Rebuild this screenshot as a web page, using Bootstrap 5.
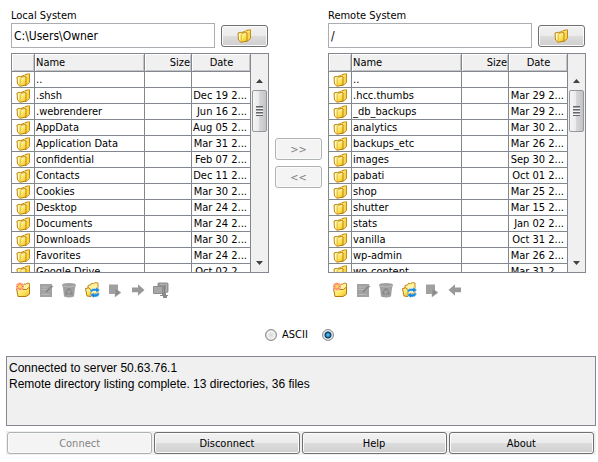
<!DOCTYPE html>
<html lang="en">
<head>
<meta charset="utf-8">
<meta name="viewport" content="width=device-width, initial-scale=1">
<title>FTP Client</title>
<link href="https://cdn.jsdelivr.net/npm/bootstrap@5.3.0/dist/css/bootstrap.min.css" rel="stylesheet">
<style>
body{background:#fff;color:#000;font-family:"DejaVu Sans Condensed","DejaVu Sans",Tahoma,sans-serif;font-stretch:condensed;font-size:11px;line-height:15px}
.systems{padding:8px 12px 0 11px}
.path-box{height:25px;border:1px solid #abadb3;border-radius:0;padding:0 2px;font-size:12px;color:#000}
.sys-btn{height:22px;padding:0;border:1px solid #707070;border-radius:3px;font-size:11px;line-height:15px;color:#000;background:linear-gradient(#f2f2f2 0,#ebebeb 50%,#dddddd 50%,#cfcfcf 100%);box-shadow:inset 0 0 0 1px #fbfbfb}
.sys-btn:disabled{background:#f4f4f4;border-color:#adb2b5;color:#838383;opacity:1}
.browse{width:47px;margin:0 1px 0 6px}
.transfer{width:59px;padding:130px 6px 0;gap:6px}
.pane{height:220px;border:1px solid #828790;margin-top:5px}
.files{table-layout:fixed;border-collapse:separate;border-spacing:0;width:100%}
.files th,.files td{height:16px;padding:0 0 0 1px;border-right:1px solid #828790;border-bottom:1px solid #828790;line-height:15px;white-space:nowrap;overflow:hidden;font-weight:400}
.files th{height:18px;line-height:17px;background:#f0f0f0;box-shadow:inset 1px 1px #fff,inset -1px -1px #c4c4c4}
.files .c-icon{width:23px;padding-left:4px}
.files .c-size{width:47px;text-align:right;padding-right:1px}
.files .c-date{width:59px;text-align:right;padding-right:3px}
.files th.c-date{text-align:center;padding-right:0}
.files svg{display:block}
.scroller{width:17px;background:#f0f0f0;padding-top:18px}
.scroller button{height:18px;padding:0;border:0;background:none;line-height:0}
.thumb{height:42px;margin:0 1px;border:1px solid #979797;border-radius:2px;background:linear-gradient(90deg,#f5f5f5 0,#e9e9eb 48%,#d6d6d8 50%,#c4c4c8 100%)}
.grip{width:7px;height:10px;background:repeating-linear-gradient(#63666b 0,#63666b 1px,#a5a7aa 1px,#a5a7aa 2px,#f3f3f3 2px,#f3f3f3 3px)}
.tools{gap:5px;padding:8px 3px 0}
.tools button{width:18px;height:18px;padding:0;border:0;background:none;line-height:0}
.mode{padding:28px 0 0 265px}
.mode input{appearance:none;width:12px;height:12px;margin:0;border:1px solid #8e8f8f;border-radius:50%;background:radial-gradient(circle,#d5d8dc 0,#eeeeee 45%,#f6f6f6 55%,#b8bcc0 75%)}
.mode input:checked{background:radial-gradient(circle at 50% 50%,#6fd0f5 0,#1f7ab5 2px,#0c3554 3px,#e8edf1 4px,#c6cacd 6px)}
.mode label{margin:0 14px 0 5px}
.log{height:70px;resize:none;border:1px solid #828790;border-radius:0;background:#f0f0f0;color:#000;padding:3px 2px;font-family:"Liberation Sans",Arial,sans-serif;font-size:12px;line-height:16px;display:block}
.lower{padding:14px 2px 0 6px}
.actions{margin-top:5px;padding:1px 2px 1px 1px;gap:2px;background:#f0f0f0}
</style>
<script src="https://cdn.jsdelivr.net/npm/bootstrap@5.3.0/dist/js/bootstrap.bundle.min.js"></script>
</head>
<body>
<svg width="0" height="0" class="position-absolute" aria-hidden="true">
<defs>
<linearGradient id="gold" x1="0" y1="0" x2="1" y2="1"><stop offset="0" stop-color="#fffbb8"/><stop offset=".55" stop-color="#fde763"/><stop offset="1" stop-color="#f0bd22"/></linearGradient>
</defs>
<symbol id="folder" viewBox="0 0 15 14"><path d="M4.500 3.500 8 2.500 9 1.500 13.500.8V9.500L10 12.500H5z" fill="#f8d84a" stroke="#c48a1a"/><path d="M9.500 4 12.500 2" stroke="#fff7b0"/><path d="M1 4 4 3.300 5 4.300 10 3.600V12L4 13.300 1.500 11z" fill="url(#gold)" stroke="#bf8614"/><path d="M4.300 5V12.500" stroke="#d9a52a" stroke-width=".7"/><path d="M2.500 5V10.500M5.500 5.300 9 4.800" stroke="#fffde0" stroke-width=".8"/></symbol>
<symbol id="open" viewBox="0 0 16 16"><path d="M4 5 8 4 9 2 11 2.300 12 1 14.500 1.500V10.500L6 14z" fill="#fff3a0" stroke="#c58a1c"/><path d="M1.500 6.500 4 6.200 5 7.500H11.500L14.500 5V12.200L11 14.500H3z" fill="url(#gold)" stroke="#b87a10"/></symbol>
<symbol id="new" viewBox="0 0 16 16"><use href="#open"/><circle cx="5" cy="4.500" r="4" fill="#ffb899"/><path d="M5 1V8M1.500 4.500H8.500M2.500 2 7.500 7M7.500 2 2.500 7" stroke="#f4683c" stroke-width=".9"/><circle cx="5" cy="4.500" r="1.800" fill="#ffd75c"/></symbol>
<symbol id="edit" viewBox="0 0 16 16"><path d="M2 2H14V15H2z" fill="#a2a2a2"/><path d="M3.500 5H9.500M3.500 7.500H8.500M3.500 12.500H11.500" stroke="#b8b8b8"/><path d="M6.500 12 7.500 9 13.500 3 15 4.500 9 10.800z" fill="#858585" stroke="#bdbdbd" stroke-width=".5"/></symbol>
<symbol id="trash" viewBox="0 0 16 16"><path d="M1 3Q1 1 8 1T15 3L14 6 13 14.500Q8 16.500 3 14.500L2 6z" fill="#a0a0a0"/><path d="M2 4Q8 6 14 4" fill="none" stroke="#bcbcbc"/><path d="M6 8.500 8 6.500 10 8.500M10.500 9.500 11 12H8M5.500 9 5 12H7" fill="none" stroke="#828282" stroke-width="1.200"/></symbol>
<symbol id="refresh" viewBox="0 0 16 16"><path d="M4 5V3.500L7 2.700 7.500 1.200 9.500 1.700 11 .7 14 1V11L5 13z" fill="#fff3a0" stroke="#c58a1c"/><path d="M1.500 6.500 5 5.800 7 8V14.500L3 14z" fill="url(#gold)" stroke="#b87a10"/><path d="M6 10Q6 6.500 10 6.500H12V5L16 8 12 10.800V9H10Q8 9 8 10zM15.500 11Q15.500 15 11.500 15H10V16L6 13 10 10.500V12H12Q13 12 13.500 11z" fill="#1689dd" stroke="#fff" stroke-width=".4"/></symbol>
<symbol id="play" viewBox="0 0 16 16"><path d="M2 2.500H11V12H2z" fill="#a0a0a0"/><path d="M8 6.500 14 10.500 8 15z" fill="#8c8c8c" stroke="#adadad" stroke-width=".5"/></symbol>
<symbol id="next" viewBox="0 0 16 16"><path d="M2 5.500H8V2.200L14.500 8 8 13.800V10.300H2z" fill="#999"/></symbol>
<symbol id="prev" viewBox="0 0 16 16"><path d="M14 5.500H8V2.200L1.500 8 8 13.800V10.300H14z" fill="#999"/></symbol>
<symbol id="zip" viewBox="0 0 16 16"><path d="M4.500 1.500Q4.500.5 6 .5H14Q15.500.5 15.500 2V9Q15.500 11 13 11H7V4H4.500z" fill="#949494"/><path d="M.5 4.500H9.500V11.500H.5z" fill="#a8a8a8" stroke="#8c8c8c"/><path d="M7 2.500H13.500V9H10.500" fill="none" stroke="#b2b2b2"/><path d="M11.500 3V11" stroke="#838383"/><path d="M9 11H13V13H9zM7 13H15V14H7zM10 14H14V16H10z" fill="#8b8b8b"/></symbol>
</svg>

<main>
<div class="systems d-flex align-items-start">
  <section class="flex-fill" aria-label="Local System">
    <label for="local-path" class="d-block">Local System</label>
    <div class="d-flex align-items-center">
      <input id="local-path" class="form-control path-box flex-fill w-auto" size="1" type="text" value="C:\Users\Owner">
      <button type="button" class="btn sys-btn browse d-flex align-items-center justify-content-center" aria-label="Browse local"><svg width="15" height="14"><use href="#folder"/></svg></button>
    </div>
    <div class="pane d-flex overflow-hidden">
      <div class="flex-fill overflow-hidden">
      <table class="files">
        <thead><tr><th class="c-icon"></th><th>Name</th><th class="c-size">Size</th><th class="c-date">Date</th></tr></thead>
        <tbody>
        <tr><td class="c-icon"><svg width="15" height="14"><use href="#folder"/></svg></td><td>..</td><td class="c-size"></td><td class="c-date"></td></tr>
        <tr><td class="c-icon"><svg width="15" height="14"><use href="#folder"/></svg></td><td>.shsh</td><td class="c-size"></td><td class="c-date">Dec 19 2...</td></tr>
        <tr><td class="c-icon"><svg width="15" height="14"><use href="#folder"/></svg></td><td>.webrenderer</td><td class="c-size"></td><td class="c-date">Jun 16 2...</td></tr>
        <tr><td class="c-icon"><svg width="15" height="14"><use href="#folder"/></svg></td><td>AppData</td><td class="c-size"></td><td class="c-date">Aug 05 2...</td></tr>
        <tr><td class="c-icon"><svg width="15" height="14"><use href="#folder"/></svg></td><td>Application Data</td><td class="c-size"></td><td class="c-date">Mar 31 2...</td></tr>
        <tr><td class="c-icon"><svg width="15" height="14"><use href="#folder"/></svg></td><td>confidential</td><td class="c-size"></td><td class="c-date">Feb 07 2...</td></tr>
        <tr><td class="c-icon"><svg width="15" height="14"><use href="#folder"/></svg></td><td>Contacts</td><td class="c-size"></td><td class="c-date">Dec 11 2...</td></tr>
        <tr><td class="c-icon"><svg width="15" height="14"><use href="#folder"/></svg></td><td>Cookies</td><td class="c-size"></td><td class="c-date">Mar 30 2...</td></tr>
        <tr><td class="c-icon"><svg width="15" height="14"><use href="#folder"/></svg></td><td>Desktop</td><td class="c-size"></td><td class="c-date">Mar 24 2...</td></tr>
        <tr><td class="c-icon"><svg width="15" height="14"><use href="#folder"/></svg></td><td>Documents</td><td class="c-size"></td><td class="c-date">Mar 24 2...</td></tr>
        <tr><td class="c-icon"><svg width="15" height="14"><use href="#folder"/></svg></td><td>Downloads</td><td class="c-size"></td><td class="c-date">Mar 30 2...</td></tr>
        <tr><td class="c-icon"><svg width="15" height="14"><use href="#folder"/></svg></td><td>Favorites</td><td class="c-size"></td><td class="c-date">Mar 24 2...</td></tr>
        <tr><td class="c-icon"><svg width="15" height="14"><use href="#folder"/></svg></td><td>Google Drive</td><td class="c-size"></td><td class="c-date">Oct 02 2...</td></tr>
        </tbody>
      </table>
      </div>
      <div class="scroller d-flex flex-column flex-shrink-0">
        <button type="button" aria-label="Scroll up"><svg width="7" height="4"><path d="M0 4 3.500 0 7 4z" fill="#404040"/></svg></button>
        <div class="thumb d-flex align-items-center justify-content-center"><div class="grip"></div></div>
        <button type="button" class="mt-auto" aria-label="Scroll down"><svg width="7" height="4"><path d="M0 0 3.500 4 7 0z" fill="#404040"/></svg></button>
      </div>
    </div>
    <div class="tools d-flex">
      <button type="button" aria-label="New folder"><svg width="16" height="16"><use href="#new"/></svg></button>
      <button type="button" disabled aria-label="Rename"><svg width="16" height="16"><use href="#edit"/></svg></button>
      <button type="button" disabled aria-label="Delete"><svg width="16" height="16"><use href="#trash"/></svg></button>
      <button type="button" aria-label="Refresh"><svg width="16" height="16"><use href="#refresh"/></svg></button>
      <button type="button" disabled aria-label="Run"><svg width="16" height="16"><use href="#play"/></svg></button>
      <button type="button" disabled aria-label="Upload"><svg width="16" height="16"><use href="#next"/></svg></button>
      <button type="button" disabled aria-label="Zip"><svg width="16" height="16"><use href="#zip"/></svg></button>
    </div>
  </section>

  <div class="transfer d-flex flex-column flex-shrink-0">
    <button type="button" class="btn sys-btn" disabled>&gt;&gt;</button>
    <button type="button" class="btn sys-btn" disabled>&lt;&lt;</button>
  </div>

  <section class="flex-fill" aria-label="Remote System">
    <label for="remote-path" class="d-block">Remote System</label>
    <div class="d-flex align-items-center">
      <input id="remote-path" class="form-control path-box flex-fill w-auto" size="1" type="text" value="/">
      <button type="button" class="btn sys-btn browse d-flex align-items-center justify-content-center" aria-label="Browse remote"><svg width="15" height="14"><use href="#folder"/></svg></button>
    </div>
    <div class="pane d-flex overflow-hidden">
      <div class="flex-fill overflow-hidden">
      <table class="files">
        <thead><tr><th class="c-icon"></th><th>Name</th><th class="c-size">Size</th><th class="c-date">Date</th></tr></thead>
        <tbody>
        <tr><td class="c-icon"><svg width="15" height="14"><use href="#folder"/></svg></td><td>..</td><td class="c-size"></td><td class="c-date"></td></tr>
        <tr><td class="c-icon"><svg width="15" height="14"><use href="#folder"/></svg></td><td>.hcc.thumbs</td><td class="c-size"></td><td class="c-date">Mar 29 2...</td></tr>
        <tr><td class="c-icon"><svg width="15" height="14"><use href="#folder"/></svg></td><td>_db_backups</td><td class="c-size"></td><td class="c-date">Mar 29 2...</td></tr>
        <tr><td class="c-icon"><svg width="15" height="14"><use href="#folder"/></svg></td><td>analytics</td><td class="c-size"></td><td class="c-date">Mar 30 2...</td></tr>
        <tr><td class="c-icon"><svg width="15" height="14"><use href="#folder"/></svg></td><td>backups_etc</td><td class="c-size"></td><td class="c-date">Mar 26 2...</td></tr>
        <tr><td class="c-icon"><svg width="15" height="14"><use href="#folder"/></svg></td><td>images</td><td class="c-size"></td><td class="c-date">Sep 30 2...</td></tr>
        <tr><td class="c-icon"><svg width="15" height="14"><use href="#folder"/></svg></td><td>pabati</td><td class="c-size"></td><td class="c-date">Oct 01 2...</td></tr>
        <tr><td class="c-icon"><svg width="15" height="14"><use href="#folder"/></svg></td><td>shop</td><td class="c-size"></td><td class="c-date">Mar 25 2...</td></tr>
        <tr><td class="c-icon"><svg width="15" height="14"><use href="#folder"/></svg></td><td>shutter</td><td class="c-size"></td><td class="c-date">Mar 15 2...</td></tr>
        <tr><td class="c-icon"><svg width="15" height="14"><use href="#folder"/></svg></td><td>stats</td><td class="c-size"></td><td class="c-date">Jan 02 2...</td></tr>
        <tr><td class="c-icon"><svg width="15" height="14"><use href="#folder"/></svg></td><td>vanilla</td><td class="c-size"></td><td class="c-date">Oct 31 2...</td></tr>
        <tr><td class="c-icon"><svg width="15" height="14"><use href="#folder"/></svg></td><td>wp-admin</td><td class="c-size"></td><td class="c-date">Mar 26 2...</td></tr>
        <tr><td class="c-icon"><svg width="15" height="14"><use href="#folder"/></svg></td><td>wp-content</td><td class="c-size"></td><td class="c-date">Mar 31 2...</td></tr>
        </tbody>
      </table>
      </div>
      <div class="scroller d-flex flex-column flex-shrink-0">
        <button type="button" aria-label="Scroll up"><svg width="7" height="4"><path d="M0 4 3.500 0 7 4z" fill="#404040"/></svg></button>
        <div class="thumb d-flex align-items-center justify-content-center"><div class="grip"></div></div>
        <button type="button" class="mt-auto" aria-label="Scroll down"><svg width="7" height="4"><path d="M0 0 3.500 4 7 0z" fill="#404040"/></svg></button>
      </div>
    </div>
    <div class="tools d-flex">
      <button type="button" aria-label="New folder"><svg width="16" height="16"><use href="#new"/></svg></button>
      <button type="button" disabled aria-label="Rename"><svg width="16" height="16"><use href="#edit"/></svg></button>
      <button type="button" disabled aria-label="Delete"><svg width="16" height="16"><use href="#trash"/></svg></button>
      <button type="button" aria-label="Refresh"><svg width="16" height="16"><use href="#refresh"/></svg></button>
      <button type="button" disabled aria-label="Run"><svg width="16" height="16"><use href="#play"/></svg></button>
      <button type="button" disabled aria-label="Download"><svg width="16" height="16"><use href="#prev"/></svg></button>
    </div>
  </section>
</div>

<div class="mode d-flex align-items-center">
  <input type="radio" name="mode" id="mode-ascii"><label for="mode-ascii">ASCII</label>
  <input type="radio" name="mode" id="mode-binary" aria-label="Binary" checked>
</div>

<div class="lower">
  <textarea class="form-control log" readonly aria-label="Connection log">Connected to server 50.63.76.1
Remote directory listing complete. 13 directories, 36 files</textarea>
  <div class="actions row-cols-4 d-flex">
    <button type="button" class="btn sys-btn flex-fill" disabled>Connect</button>
    <button type="button" class="btn sys-btn flex-fill">Disconnect</button>
    <button type="button" class="btn sys-btn flex-fill">Help</button>
    <button type="button" class="btn sys-btn flex-fill">About</button>
  </div>
</div>
</main>
</body>
</html>
